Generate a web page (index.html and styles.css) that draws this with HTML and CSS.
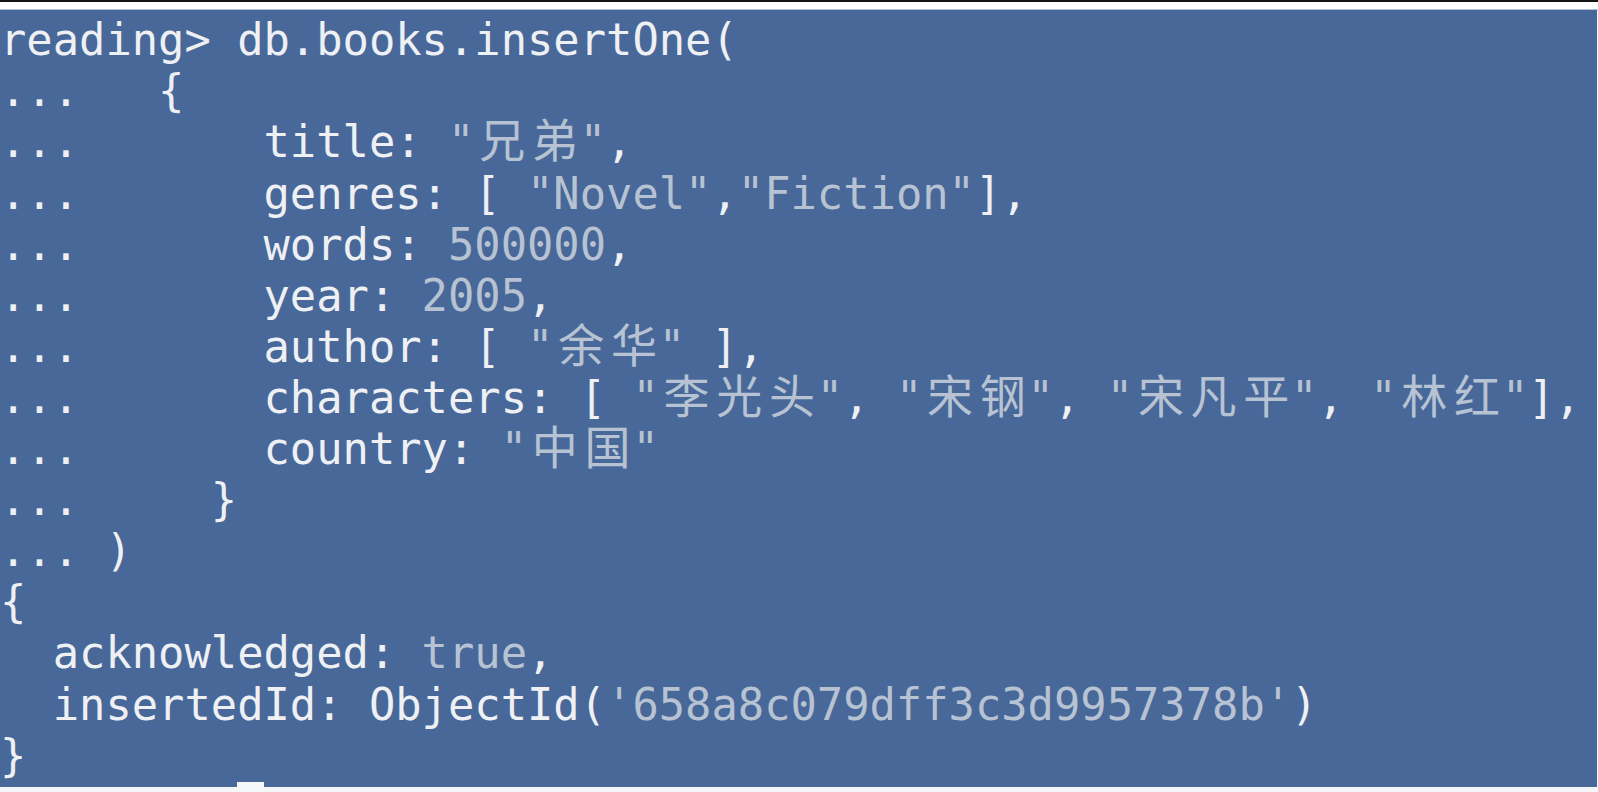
FILE: index.html
```html
<!DOCTYPE html>
<html lang="zh">
<head>
<meta charset="utf-8">
<title>mongosh</title>
<link rel="stylesheet" href="styles.css">
</head>
<body>
<div class="screen">
  <div class="topbar"></div>
  <div class="gap"></div>
  <div class="edge"></div>
  <div class="term">
    <div class="line">reading&gt; db.books.insertOne(</div>
    <div class="line">...   {</div>
    <div class="line">...       title: <span class="s">"<span class="w">兄</span><span class="w">弟</span>"</span>,</div>
    <div class="line">...       genres: [ <span class="s">"Novel"</span>,<span class="s">"Fiction"</span>],</div>
    <div class="line">...       words: <span class="s">500000</span>,</div>
    <div class="line">...       year: <span class="s">2005</span>,</div>
    <div class="line">...       author: [ <span class="s">"<span class="w">余</span><span class="w">华</span>"</span> ],</div>
    <div class="line">...       characters: [ <span class="s">"<span class="w">李</span><span class="w">光</span><span class="w">头</span>"</span>, <span class="s">"<span class="w">宋</span><span class="w">钢</span>"</span>, <span class="s">"<span class="w">宋</span><span class="w">凡</span><span class="w">平</span>"</span>, <span class="s">"<span class="w">林</span><span class="w">红</span>"</span>],</div>
    <div class="line">...       country: <span class="s">"<span class="w">中</span><span class="w">国</span>"</span></div>
    <div class="line">...     }</div>
    <div class="line">... )</div>
    <div class="line">{</div>
    <div class="line">  acknowledged: <span class="s">true</span>,</div>
    <div class="line">  insertedId: ObjectId(<span class="s">'658a8c079dff3c3d9957378b'</span>)</div>
    <div class="line">}</div>
    <div class="line">         <span class="cursor"></span></div>
  </div>
</div>
</body>
</html>
```

FILE: styles.css
```css
html, body {
  margin: 0;
  padding: 0;
  overflow: hidden;
  background: #ffffff;
}

.screen {
  width: 1598px;
  height: 792px;
  display: flex;
  flex-direction: column;
  background: #f4f6fa;
}

.topbar {
  height: 2px;
  background: #121416;
}

.gap {
  height: 7px;
  background: #ffffff;
}

.edge {
  height: 1px;
  background: #b3c1d6;
}

.term {
  width: 1597px;
  height: 777px;
  box-sizing: border-box;
  padding-top: 4.3px;
  background: #476898;
  overflow: hidden;
  font-family: "DejaVu Sans Mono", "Noto Sans CJK SC", monospace;
  font-size: 43.77px;
  line-height: 51.1px;
  color: #eef0f4;
  display: flex;
  flex-direction: column;
}

.line {
  height: 51.1px;
  flex: none;
  white-space: pre;
}

.s {
  color: #b7c2d3;
}

.w {
  display: inline-block;
  width: 52.7px;
  text-align: center;
  font-family: "Noto Sans CJK SC", sans-serif;
  font-size: 46px;
  line-height: 40px;
  padding-left: 3px;
  box-sizing: border-box;
}

.cursor {
  display: inline-block;
  width: 26.35px;
  height: 14px;
  background: #f4f6fa;
  vertical-align: top;
  margin-top: 1px;
}
```
